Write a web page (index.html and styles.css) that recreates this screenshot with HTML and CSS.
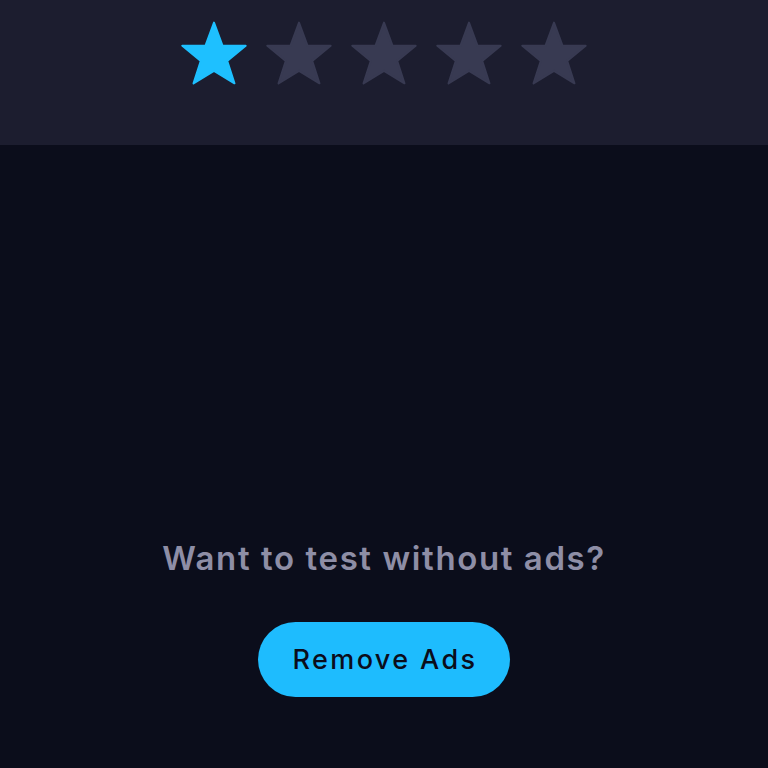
FILE: index.html
```html
<!DOCTYPE html>
<html>
<head>
<meta charset="utf-8">
<link rel="stylesheet" href="styles.css">
</head>
<body>
<header class="rating">
  <svg class="star star-on" viewBox="0 0 100 96"><polygon points="50,2 63,37 98,37 70,60 81,94 50,75 19,94 30,60 2,37 37,37"/></svg>
  <svg class="star" viewBox="0 0 100 96"><polygon points="50,2 63,37 98,37 70,60 81,94 50,75 19,94 30,60 2,37 37,37"/></svg>
  <svg class="star" viewBox="0 0 100 96"><polygon points="50,2 63,37 98,37 70,60 81,94 50,75 19,94 30,60 2,37 37,37"/></svg>
  <svg class="star" viewBox="0 0 100 96"><polygon points="50,2 63,37 98,37 70,60 81,94 50,75 19,94 30,60 2,37 37,37"/></svg>
  <svg class="star" viewBox="0 0 100 96"><polygon points="50,2 63,37 98,37 70,60 81,94 50,75 19,94 30,60 2,37 37,37"/></svg>
</header>
<main class="content">
  <p class="prompt">Want to test without ads?</p>
  <button class="remove-btn">Remove Ads</button>
</main>
</body>
</html>
```
FILE: styles.css
```css
html, body {
  margin: 0;
  padding: 0;
  height: 100%;
  background: #0b0d1b;
  font-family: Inter, "Open Sans", sans-serif;
}
.rating {
  height: 145px;
  background: #1c1d2f;
  display: flex;
  justify-content: center;
  align-items: flex-start;
  gap: 19px;
  padding-top: 21px;
  box-sizing: border-box;
}
.star {
  width: 66px;
  height: 64px;
  fill: #383a52;
  stroke: #383a52;
  stroke-width: 3;
  stroke-linejoin: round;
}
.star-on {
  fill: #1ec0ff;
  stroke: #1ec0ff;
}
.content {
  display: flex;
  flex-direction: column;
  align-items: center;
  padding-top: 393px;
}
.prompt {
  margin: 0;
  font-size: 33px;
  font-weight: 600;
  color: #8e8ea6;
  letter-spacing: 1.6px;
  line-height: 40px;
}
.remove-btn {
  margin-top: 44px;
  width: 252px;
  height: 75px;
  border: none;
  border-radius: 38px;
  background: #1ebcfe;
  color: #0b0d1b;
  font-family: inherit;
  font-size: 27px;
  font-weight: 500;
  letter-spacing: 2.4px;
  padding: 0 0 0 2px;
}
```
